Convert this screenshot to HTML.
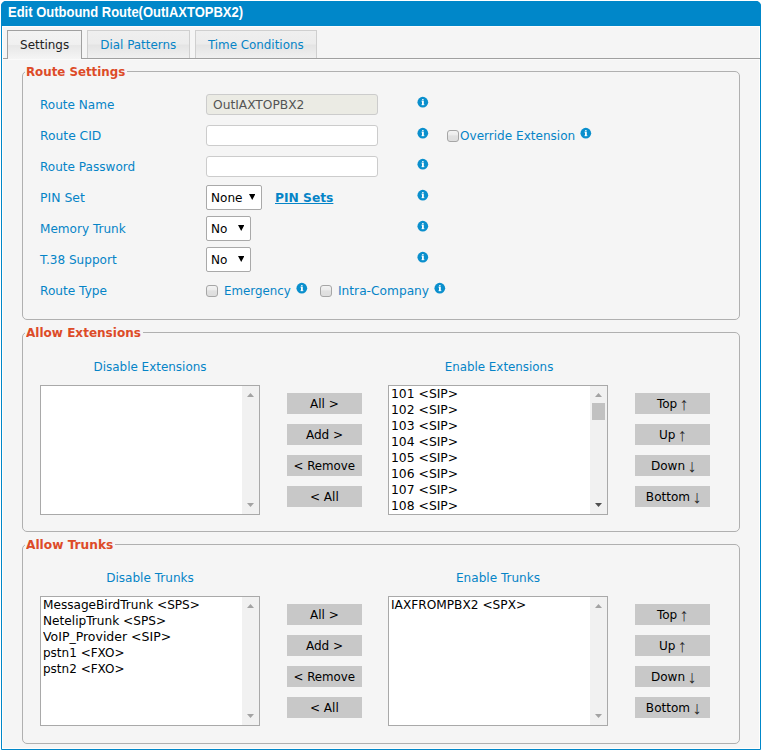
<!DOCTYPE html>
<html>
<head>
<meta charset="utf-8">
<title>Edit Outbound Route</title>
<style>
html,body{margin:0;padding:0;}
body{width:762px;height:751px;overflow:hidden;background:#fff;font-family:"DejaVu Sans","Liberation Sans",sans-serif;font-size:12px;color:#000;position:relative;}
.abs{position:absolute;}
#win{position:absolute;left:1px;top:1px;width:760px;height:749px;background:#f5f5f5;border:1px solid #0087c9;border-radius:5px 5px 0 0;box-sizing:border-box;box-shadow:inset 0 0 0 1px #fffefc;}
#title{position:absolute;left:1px;top:1px;width:760px;height:25px;background:#0087c9;border-radius:5px 5px 0 0;}
#tl2{position:absolute;left:2px;top:26px;width:758px;height:1px;background:#fdfdfd;}
#title span{position:absolute;left:7px;top:3px;font:bold 14px "Liberation Sans",sans-serif;color:#fff;white-space:nowrap;transform:scaleX(.928);transform-origin:0 0;}
.tab{position:absolute;top:30px;height:28px;box-sizing:border-box;border:1px solid #cfcfcf;border-bottom:none;background:linear-gradient(#efefef 0%,#ececec 47%,#e4e4e4 53%,#f0f0f0 100%);color:#0584c7;line-height:28px;text-align:center;white-space:nowrap;}
.tab.act{color:#222;border-color:#a0a0a0;height:29px;background:linear-gradient(#f3f3f3 0%,#f0f0f0 48%,#e7e7e7 52%,#f5f5f5 100%);}
#tabline{position:absolute;left:3px;top:58px;width:757px;height:1px;background:#a0a0a0;box-shadow:0 1px 0 #fafafa;}
.fs{position:absolute;left:22px;width:716px;border:1px solid #b0b0b0;border-radius:5px;box-sizing:content-box;}
.lg{position:absolute;left:25px;height:16px;line-height:18px;--s:.985;background:#f5f5f5;color:#dd4b28;font-weight:bold;padding:0 1px;white-space:nowrap;}
.lbl{position:absolute;left:39.5px;color:#0584c7;white-space:nowrap;line-height:16px;transform:scaleX(var(--s,1.005));transform-origin:0 0;}
.txt{position:absolute;color:#0584c7;white-space:nowrap;line-height:16px;transform:scaleX(var(--s,1.005));transform-origin:0 0;}
.t{display:inline-block;white-space:nowrap;transform:scaleX(var(--s,1.005));transform-origin:0 0;}
.tc{display:inline-block;white-space:nowrap;transform:translateX(var(--dx,0px)) scaleX(var(--s,1.005));transform-origin:50% 0;}
.txt.c{transform-origin:50% 0;}
.inp{position:absolute;left:206px;width:172px;height:21px;box-sizing:border-box;border:1px solid #ccc;border-radius:3px;background:#fff;}
.inp.dis{background:#ebebe4;color:#545454;line-height:21px;padding-left:6.4px;}
.sel{position:absolute;left:206px;height:25px;box-sizing:border-box;border:1px solid #a9a9a9;border-radius:2px;background:#fff;color:#000;line-height:25px;padding-left:3.5px;white-space:nowrap;}
.sel i{position:absolute;right:5.6px;top:8px;width:6.4px;height:6px;background:#000;clip-path:polygon(0 0,100% 0,50% 100%);}
.info{position:absolute;width:12px;height:12px;overflow:visible;}
.cb{position:absolute;width:10px;height:10px;border:1px solid #a6a6a6;border-radius:3px;background:linear-gradient(#f3f3f3 0%,#ececec 40%,#e1e1e1 48%,#dedede 100%);box-sizing:content-box;}
.list{position:absolute;width:220px;height:130px;box-sizing:border-box;border:1px solid #a9a9a9;background:#fff;overflow:hidden;}
.list div.o{height:16px;line-height:16px;padding-left:2px;--s:1.03;white-space:nowrap;color:#000;}
.sb{position:absolute;right:0;top:0;width:17px;height:128px;background:#f1f1f1;}
.sb .up{position:absolute;left:5px;top:7px;width:7px;height:4px;background:#a3a3a3;clip-path:polygon(50% 0,100% 100%,0 100%);}
.sb .dn{position:absolute;left:5px;bottom:7px;width:7px;height:4px;background:#a3a3a3;clip-path:polygon(0 0,100% 0,50% 100%);}
.sb.on .dn{background:#505050;}
.sb .th{position:absolute;left:2px;top:17px;width:13px;height:17px;background:#c1c1c1;}
.ar{font-family:"Liberation Sans",sans-serif;font-size:18px;line-height:0;margin:0 -1.5px 0 -1.5px;position:relative;top:1.5px;color:#2a2a2a;}
.btn{position:absolute;width:75px;height:21px;background:#c8c8c8;color:#000;line-height:22px;text-align:center;white-space:nowrap;}
</style>
</head>
<body>
<div id="win"></div>
<div id="title"><span>Edit Outbound Route(OutIAXTOPBX2)</span></div>

<div id="tl2"></div>
<div id="tabline"></div>
<div class="tab act" style="left:7px;width:75px;"><span class="tc" style="--s:.995">Settings</span></div>
<div class="tab" style="left:87px;width:103px;"><span class="tc" style="--s:.995">Dial Patterns</span></div>
<div class="tab" style="left:195px;width:122px;"><span class="tc" style="--s:.99;--dx:-.6px">Time Conditions</span></div>

<!-- Route Settings -->
<div class="fs" style="top:71px;height:247px;"></div>
<div class="lg" style="top:63px;width:100px;"><span class="t">Route Settings</span></div>

<div class="lbl" style="top:97px;">Route Name</div>
<div class="inp dis" style="top:94px;"><span class="t" style="--s:1.02">OutIAXTOPBX2</span></div>
<svg class="info" style="left:417px;top:96px;" viewBox="0 0 12 12"><circle cx="5.8" cy="6.2" r="5.35" fill="#0a8fcd"/><rect x="5.0" y="3.05" width="1.7" height="1.1" rx=".5" fill="#fff" opacity=".9"/><rect x="5.0" y="4.7" width="1.8" height="4.4" fill="#fff"/><rect x="4.3" y="4.7" width="1" height=".8" fill="#fff" opacity=".8"/><rect x="4.3" y="8.4" width="3.2" height=".7" fill="#fff" opacity=".8"/></svg>

<div class="lbl" style="top:128px;--s:1.025">Route CID</div>
<div class="inp" style="top:125px;"></div>
<svg class="info" style="left:417px;top:127px;" viewBox="0 0 12 12"><circle cx="5.8" cy="6.2" r="5.35" fill="#0a8fcd"/><rect x="5.0" y="3.05" width="1.7" height="1.1" rx=".5" fill="#fff" opacity=".9"/><rect x="5.0" y="4.7" width="1.8" height="4.4" fill="#fff"/><rect x="4.3" y="4.7" width="1" height=".8" fill="#fff" opacity=".8"/><rect x="4.3" y="8.4" width="3.2" height=".7" fill="#fff" opacity=".8"/></svg>
<div class="cb" style="left:447px;top:130px;"></div>
<div class="txt" style="left:459.5px;top:128px;">Override Extension</div>
<svg class="info" style="left:580.2px;top:127px;" viewBox="0 0 12 12"><circle cx="5.8" cy="6.2" r="5.35" fill="#0a8fcd"/><rect x="5.0" y="3.05" width="1.7" height="1.1" rx=".5" fill="#fff" opacity=".9"/><rect x="5.0" y="4.7" width="1.8" height="4.4" fill="#fff"/><rect x="4.3" y="4.7" width="1" height=".8" fill="#fff" opacity=".8"/><rect x="4.3" y="8.4" width="3.2" height=".7" fill="#fff" opacity=".8"/></svg>

<div class="lbl" style="top:159px;">Route Password</div>
<div class="inp" style="top:156px;"></div>
<svg class="info" style="left:417px;top:158px;" viewBox="0 0 12 12"><circle cx="5.8" cy="6.2" r="5.35" fill="#0a8fcd"/><rect x="5.0" y="3.05" width="1.7" height="1.1" rx=".5" fill="#fff" opacity=".9"/><rect x="5.0" y="4.7" width="1.8" height="4.4" fill="#fff"/><rect x="4.3" y="4.7" width="1" height=".8" fill="#fff" opacity=".8"/><rect x="4.3" y="8.4" width="3.2" height=".7" fill="#fff" opacity=".8"/></svg>

<div class="lbl" style="top:190px;--s:1.035">PIN Set</div>
<div class="sel" style="top:185px;width:56px;"><span class="t">None</span><i></i></div>
<div class="txt" style="left:275px;top:190px;font-weight:bold;text-decoration:underline;text-decoration-thickness:1px;text-underline-offset:1px;--s:1.022">PIN Sets</div>
<svg class="info" style="left:417px;top:189px;" viewBox="0 0 12 12"><circle cx="5.8" cy="6.2" r="5.35" fill="#0a8fcd"/><rect x="5.0" y="3.05" width="1.7" height="1.1" rx=".5" fill="#fff" opacity=".9"/><rect x="5.0" y="4.7" width="1.8" height="4.4" fill="#fff"/><rect x="4.3" y="4.7" width="1" height=".8" fill="#fff" opacity=".8"/><rect x="4.3" y="8.4" width="3.2" height=".7" fill="#fff" opacity=".8"/></svg>

<div class="lbl" style="top:221px;">Memory Trunk</div>
<div class="sel" style="top:216px;width:45px;"><span class="t">No</span><i></i></div>
<svg class="info" style="left:417px;top:220px;" viewBox="0 0 12 12"><circle cx="5.8" cy="6.2" r="5.35" fill="#0a8fcd"/><rect x="5.0" y="3.05" width="1.7" height="1.1" rx=".5" fill="#fff" opacity=".9"/><rect x="5.0" y="4.7" width="1.8" height="4.4" fill="#fff"/><rect x="4.3" y="4.7" width="1" height=".8" fill="#fff" opacity=".8"/><rect x="4.3" y="8.4" width="3.2" height=".7" fill="#fff" opacity=".8"/></svg>

<div class="lbl" style="top:252px;">T.38 Support</div>
<div class="sel" style="top:247px;width:45px;"><span class="t">No</span><i></i></div>
<svg class="info" style="left:417px;top:251px;" viewBox="0 0 12 12"><circle cx="5.8" cy="6.2" r="5.35" fill="#0a8fcd"/><rect x="5.0" y="3.05" width="1.7" height="1.1" rx=".5" fill="#fff" opacity=".9"/><rect x="5.0" y="4.7" width="1.8" height="4.4" fill="#fff"/><rect x="4.3" y="4.7" width="1" height=".8" fill="#fff" opacity=".8"/><rect x="4.3" y="8.4" width="3.2" height=".7" fill="#fff" opacity=".8"/></svg>

<div class="lbl" style="top:283px;--s:1.012">Route Type</div>
<div class="cb" style="left:206px;top:285px;"></div>
<div class="txt" style="left:223.5px;top:283px;--s:.985">Emergency</div>
<svg class="info" style="left:296.4px;top:282px;" viewBox="0 0 12 12"><circle cx="5.8" cy="6.2" r="5.35" fill="#0a8fcd"/><rect x="5.0" y="3.05" width="1.7" height="1.1" rx=".5" fill="#fff" opacity=".9"/><rect x="5.0" y="4.7" width="1.8" height="4.4" fill="#fff"/><rect x="4.3" y="4.7" width="1" height=".8" fill="#fff" opacity=".8"/><rect x="4.3" y="8.4" width="3.2" height=".7" fill="#fff" opacity=".8"/></svg>
<div class="cb" style="left:320px;top:285px;"></div>
<div class="txt" style="left:337.5px;top:283px;--s:1.017">Intra-Company</div>
<svg class="info" style="left:434.3px;top:282px;" viewBox="0 0 12 12"><circle cx="5.8" cy="6.2" r="5.35" fill="#0a8fcd"/><rect x="5.0" y="3.05" width="1.7" height="1.1" rx=".5" fill="#fff" opacity=".9"/><rect x="5.0" y="4.7" width="1.8" height="4.4" fill="#fff"/><rect x="4.3" y="4.7" width="1" height=".8" fill="#fff" opacity=".8"/><rect x="4.3" y="8.4" width="3.2" height=".7" fill="#fff" opacity=".8"/></svg>

<!-- Allow Extensions -->
<div class="fs" style="top:332px;height:198px;"></div>
<div class="lg" style="top:324px;width:116px;--s:1.003"><span class="t">Allow Extensions</span></div>
<div class="txt c" style="left:40px;width:220px;text-align:center;top:359px;--s:.996">Disable Extensions</div>
<div class="txt c" style="left:388.5px;width:220px;text-align:center;top:359px;--s:.989">Enable Extensions</div>
<div class="list" style="left:40px;top:385px;"><div class="sb"><div class="up"></div><div class="dn"></div></div></div>
<div class="list" style="left:388px;top:385px;">
<div class="o"><span class="t">101 &lt;SIP&gt;</span></div><div class="o"><span class="t">102 &lt;SIP&gt;</span></div><div class="o"><span class="t">103 &lt;SIP&gt;</span></div><div class="o"><span class="t">104 &lt;SIP&gt;</span></div><div class="o"><span class="t">105 &lt;SIP&gt;</span></div><div class="o"><span class="t">106 &lt;SIP&gt;</span></div><div class="o"><span class="t">107 &lt;SIP&gt;</span></div><div class="o"><span class="t">108 &lt;SIP&gt;</span></div>
<div class="sb on"><div class="up"></div><div class="th"></div><div class="dn"></div></div></div>
<div class="btn" style="left:287px;top:393px;"><span class="tc">All &gt;</span></div>
<div class="btn" style="left:287px;top:424px;"><span class="tc">Add &gt;</span></div>
<div class="btn" style="left:287px;top:455px;"><span class="tc" style="--s:.985">&lt; Remove</span></div>
<div class="btn" style="left:287px;top:486px;"><span class="tc">&lt; All</span></div>
<div class="btn" style="left:635px;top:393px;"><span class="tc">Top <span class="ar">&#8593;</span></span></div>
<div class="btn" style="left:635px;top:424px;"><span class="tc">Up <span class="ar">&#8593;</span></span></div>
<div class="btn" style="left:635px;top:455px;"><span class="tc">Down <span class="ar">&#8595;</span></span></div>
<div class="btn" style="left:635px;top:486px;"><span class="tc">Bottom <span class="ar">&#8595;</span></span></div>

<!-- Allow Trunks -->
<div class="fs" style="top:544px;height:198px;"></div>
<div class="lg" style="top:536px;width:88px;--s:1.015"><span class="t">Allow Trunks</span></div>
<div class="txt c" style="left:40px;width:220px;text-align:center;top:570px;">Disable Trunks</div>
<div class="txt c" style="left:388px;width:220px;text-align:center;top:570px;">Enable Trunks</div>
<div class="list" style="left:40px;top:596px;">
<div class="o"><span class="t" style="--s:1.009">MessageBirdTrunk &lt;SPS&gt;</span></div><div class="o"><span class="t" style="--s:1.011">NetelipTrunk &lt;SPS&gt;</span></div><div class="o"><span class="t" style="--s:1.041">VoIP_Provider &lt;SIP&gt;</span></div><div class="o"><span class="t" style="--s:1.0">pstn1 &lt;FXO&gt;</span></div><div class="o"><span class="t" style="--s:1.0">pstn2 &lt;FXO&gt;</span></div>
<div class="sb"><div class="up"></div><div class="dn"></div></div></div>
<div class="list" style="left:388px;top:596px;">
<div class="o"><span class="t" style="--s:1.014">IAXFROMPBX2 &lt;SPX&gt;</span></div>
<div class="sb"><div class="up"></div><div class="dn"></div></div></div>
<div class="btn" style="left:287px;top:604px;"><span class="tc">All &gt;</span></div>
<div class="btn" style="left:287px;top:635px;"><span class="tc">Add &gt;</span></div>
<div class="btn" style="left:287px;top:666px;"><span class="tc" style="--s:.985">&lt; Remove</span></div>
<div class="btn" style="left:287px;top:697px;"><span class="tc">&lt; All</span></div>
<div class="btn" style="left:635px;top:604px;"><span class="tc">Top <span class="ar">&#8593;</span></span></div>
<div class="btn" style="left:635px;top:635px;"><span class="tc">Up <span class="ar">&#8593;</span></span></div>
<div class="btn" style="left:635px;top:666px;"><span class="tc">Down <span class="ar">&#8595;</span></span></div>
<div class="btn" style="left:635px;top:697px;"><span class="tc">Bottom <span class="ar">&#8595;</span></span></div>

</body>
</html>
